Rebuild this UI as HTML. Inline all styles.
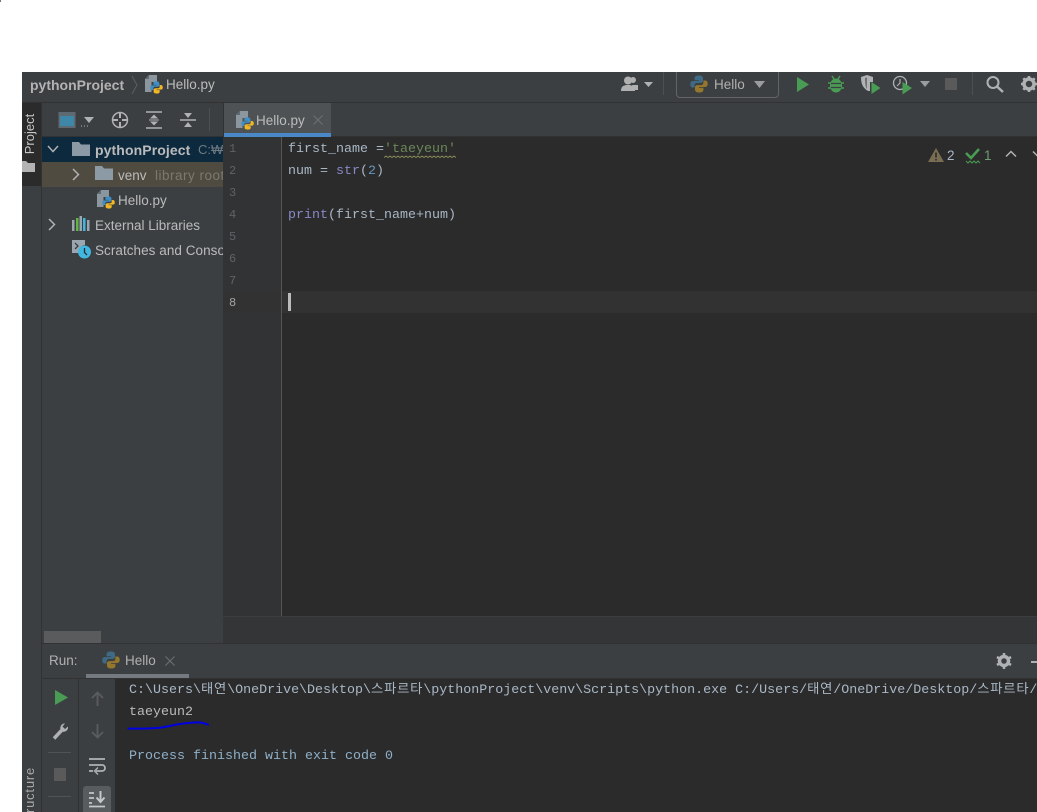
<!DOCTYPE html>
<html><head><meta charset="utf-8"><style>
html,body{margin:0;padding:0;background:#fff;width:1037px;height:812px;overflow:hidden}
#w{position:relative;width:1037px;height:812px;overflow:hidden;font-family:"Liberation Sans","Noto Sans CJK KR",sans-serif;font-size:13.5px;color:#bbbbbb}
.b{position:absolute}
.t{position:absolute;white-space:pre;line-height:18px}
.m{position:absolute;white-space:pre;font-family:"Liberation Mono","Noto Sans CJK KR",monospace;font-size:13.33px;line-height:18px;color:#a9b7c6}
.k{font-size:13.33px;letter-spacing:.78px}
.n{position:absolute;font-family:"Liberation Mono",monospace;font-size:12px;line-height:16px;color:#606366;left:229px}
svg{position:absolute;overflow:visible}
</style></head><body><div id="w">
<svg width="0" height="0" style="position:absolute"><defs>
<symbol id="py" viewBox="0 0 18 18"><path d="M8.7 0.5C5.5 0.5 4.6 1.7 4.6 3.4V5.3H9V6H2.8C1 6 0.3 7.5 0.3 9.2 0.3 11 1 12.5 2.8 12.5H4.6V10.2C4.6 8.7 5.6 7.9 7 7.9H10.8C12 7.9 13 7 13 5.7V3.4C13 1.5 11.5 0.5 8.7 0.5Z" fill="#3f8fc4"/><path d="M9.3 17.5C12.5 17.5 13.4 16.3 13.4 14.6V12.7H9V12H15.2C17 12 17.7 10.5 17.7 8.8 17.7 7 17 5.5 15.2 5.5H13.4V7.8C13.4 9.3 12.4 10.1 11 10.1H7.2C6 10.1 5 11 5 12.3V14.6C5 16.5 6.5 17.5 9.3 17.5Z" fill="#f2b824"/></symbol>
<symbol id="pydim" viewBox="0 0 18 18"><path d="M8.7 0.5C5.5 0.5 4.6 1.7 4.6 3.4V5.3H9V6H2.8C1 6 0.3 7.5 0.3 9.2 0.3 11 1 12.5 2.8 12.5H4.6V10.2C4.6 8.7 5.6 7.9 7 7.9H10.8C12 7.9 13 7 13 5.7V3.4C13 1.5 11.5 0.5 8.7 0.5Z" fill="#3e6a86"/><path d="M9.3 17.5C12.5 17.5 13.4 16.3 13.4 14.6V12.7H9V12H15.2C17 12 17.7 10.5 17.7 8.8 17.7 7 17 5.5 15.2 5.5H13.4V7.8C13.4 9.3 12.4 10.1 11 10.1H7.2C6 10.1 5 11 5 12.3V14.6C5 16.5 6.5 17.5 9.3 17.5Z" fill="#94762c"/></symbol>
<symbol id="pyf" viewBox="0 0 18 19"><path d="M4 0H12V7H6.500V17H0V4Z" fill="#8b969e"/><path d="M4 0V4H0Z" fill="#5f6b73"/><use href="#py" x="5" y="6" width="13" height="13"/></symbol>
<symbol id="folder" viewBox="0 0 18 14"><path d="M0 0H7L9 2.500H18V14H0Z" fill="#8c9aa5"/></symbol>
</defs></svg>

<div class="b" style="left:0;top:0;width:1px;height:2px;background:#777"></div>

<!-- window -->
<div class="b" style="left:22px;top:72px;width:1015px;height:740px;background:#3c3f41"></div>
<div class="b" style="left:22px;top:102px;width:1015px;height:1px;background:#323232"></div>

<!-- top bar -->
<div class="t" style="left:30px;top:76px;font-weight:bold;color:#b3b3b3;font-size:14px">pythonProject</div>
<svg style="left:131px;top:75px" width="8" height="20"><path d="M1 1L6 10 1 19" fill="none" stroke="#5c5f61"/></svg>
<svg style="left:145px;top:75px" width="18" height="19"><use href="#pyf"/></svg>
<div class="t" style="left:166px;top:76px">Hello.py</div>

<svg style="left:621px;top:76px" width="32" height="16"><circle cx="7" cy="4.500" r="4" fill="#b0b0b0"/><path d="M0 15C0 10 3 9 7 9 11 9 14 10 14 15Z" fill="#b0b0b0"/><circle cx="12" cy="4" r="3" fill="#b0b0b0"/><path d="M11 9H17V14H13Z" fill="#b0b0b0"/><path d="M23 6H32L27.500 11Z" fill="#afb1b3"/></svg>
<div class="b" style="left:663px;top:72px;width:1px;height:23px;background:#4d5052"></div>
<div class="b" style="left:676px;top:68px;border:1px solid #646464;border-radius:4px;box-sizing:border-box;clip-path:inset(4px 0 0 0);width:103px;height:30px;"></div>
<svg style="left:690px;top:75px" width="18" height="18"><use href="#pydim"/></svg>
<div class="t" style="left:714px;top:76px;color:#b0b0b0">Hello</div>
<svg style="left:754px;top:81px" width="12" height="8"><path d="M0 0H11L5.500 7Z" fill="#9a9c9e"/></svg>

<svg style="left:796px;top:76px" width="14" height="17"><path d="M1 1L13 8.500 1 16Z" fill="#499c54"/></svg>
<svg style="left:828px;top:75px" width="16" height="18"><g stroke="#499c54" stroke-width="1.500" fill="none"><path d="M4 1L6 4M12 1L10 4M0 8H3M13 8H16M0 13H3M13 13H16"/></g><ellipse cx="8" cy="10.500" rx="6" ry="7" fill="#499c54"/><path d="M3 8.500H13M3 12.500H13" stroke="#3c3f41" stroke-width="1.300"/></svg>
<svg style="left:861px;top:75px" width="20" height="20"><path d="M0 2L6 0 12 2V7H9V16H7C2 13 0 9 0 2Z" fill="#afb1b3"/><path d="M6 2.500V14C4.500 12 4 9 4 3Z" fill="#6e7072"/><path d="M10.500 7L19.500 13 10.500 19Z" fill="#499c54"/></svg>
<svg style="left:892px;top:75px" width="21" height="20"><circle cx="8" cy="8" r="6.500" fill="none" stroke="#afb1b3" stroke-width="1.300"/><path d="M8 4V8L5 11" fill="none" stroke="#afb1b3" stroke-width="1.200"/><path d="M10.500 7L20 13 10.500 19.500Z" fill="#499c54"/></svg>
<svg style="left:920px;top:81px" width="11" height="7"><path d="M0 0H10L5 6Z" fill="#9a9c9e"/></svg>
<div class="b" style="left:945px;top:78px;width:12px;height:12px;background:#5a5a5a"></div>
<div class="b" style="left:972px;top:72px;width:1px;height:23px;background:#4d5052"></div>
<svg style="left:986px;top:75px" width="18" height="18"><circle cx="7" cy="7.500" r="5.500" fill="none" stroke="#afb1b3" stroke-width="2"/><path d="M11 11.500L17 17" stroke="#afb1b3" stroke-width="2.500"/></svg>
<svg style="left:1021px;top:76px" width="16" height="16"><circle cx="8" cy="8" r="5" fill="none" stroke="#afb1b3" stroke-width="3.500"/><path d="M8 0V3M8 13V16M0 8H3M13 8H16M2.300 2.300L4.300 4.300M11.700 11.700L13.700 13.700M2.300 13.700L4.300 11.700M11.700 4.300L13.700 2.300" stroke="#afb1b3" stroke-width="2.500"/></svg>

<!-- left strip -->
<div class="b" style="left:41px;top:103px;width:1px;height:709px;background:#323232"></div>
<div class="b" style="left:22px;top:103px;width:19px;height:83px;background:#2b2b2b"></div>
<div class="t" style="left:1px;top:125px;width:58px;text-align:center;transform:rotate(-90deg);font-size:13px;color:#c8c8c8;transform-origin:center">Project</div>
<svg style="left:22px;top:161px" width="13" height="11"><path d="M0 0H4L6 2H13V11H0Z" fill="#b3b3b3"/></svg>
<div class="t" style="left:1px;top:781px;width:58px;text-align:center;transform:rotate(-90deg);font-size:13px;color:#aaa;letter-spacing:.8px">ructure</div>

<!-- project toolbar -->
<svg style="left:58px;top:111px" width="36" height="18"><rect x=".500" y="1" width="17" height="16" fill="#5e6a72"/><rect x="2" y="5" width="14" height="10" fill="#3e87a8"/><path d="M26 6H36L31 12Z" fill="#afb1b3"/><path d="M23 15H24M26 15H27M29 15H30" stroke="#afb1b3"/></svg>
<svg style="left:111px;top:111px" width="18" height="18"><circle cx="9" cy="9" r="7.500" fill="none" stroke="#afb1b3" stroke-width="1.500"/><path d="M9 1V7M9 11V17M1 9H7M11 9H17" stroke="#afb1b3" stroke-width="2"/></svg>
<svg style="left:146px;top:111px" width="16" height="18"><path d="M0 1H16M0 17H16" stroke="#afb1b3" stroke-width="1.500"/><path d="M8 3.500L12 7.500H4ZM8 14.500L12 10.500H4Z" fill="#afb1b3"/><path d="M3 9H13" stroke="#afb1b3"/></svg>
<svg style="left:180px;top:111px" width="16" height="18"><path d="M0 9H16" stroke="#afb1b3" stroke-width="1.500"/><path d="M8 7L12 2H4ZM8 11L12 16H4Z" fill="#afb1b3"/></svg>
<div class="b" style="left:209px;top:108px;width:1px;height:23px;background:#4d5052"></div>

<!-- tree -->
<div class="b" style="left:42px;top:136px;width:181px;height:1px;background:#323232"></div>
<div class="b" style="left:42px;top:137px;width:181px;height:25px;background:#0d293e"></div>
<div class="b" style="left:42px;top:162px;width:181px;height:25px;background:#4f4b41"></div>
<svg style="left:47px;top:144px" width="12" height="10"><path d="M1 2L6 7.500 11 2" fill="none" stroke="#afb1b3" stroke-width="1.500"/></svg>
<svg style="left:72px;top:142px" width="18" height="14"><use href="#folder"/></svg>
<div class="t" style="left:95px;top:141px;font-weight:bold;font-size:14px;letter-spacing:.1px;color:#bbbbbb">pythonProject</div>
<div class="t" style="left:198px;top:141px;width:25px;overflow:hidden;color:#6f7a82;font-size:13px">C:₩Us</div>
<svg style="left:71px;top:168px" width="9" height="13"><path d="M2 1L7.500 6.500 2 12" fill="none" stroke="#afb1b3" stroke-width="1.500"/></svg>
<svg style="left:95px;top:166px" width="18" height="14"><use href="#folder"/></svg>
<div class="t" style="left:118px;top:167px">venv</div>
<div class="t" style="left:155px;top:167px;width:68px;overflow:hidden;color:#7c7a6f;letter-spacing:.5px">library root</div>
<svg style="left:97px;top:190px" width="18" height="19"><use href="#pyf"/></svg>
<div class="t" style="left:118px;top:192px">Hello.py</div>
<svg style="left:47px;top:218px" width="9" height="13"><path d="M2 1L7.500 6.500 2 12" fill="none" stroke="#afb1b3" stroke-width="1.500"/></svg>
<svg style="left:72px;top:216px" width="18" height="15"><rect x="0" y="4" width="2.500" height="11" fill="#9aa7b0"/><rect x="4" y="2" width="2.500" height="13" fill="#62b543"/><rect x="7.500" y="0" width="2.500" height="15" fill="#9aa7b0"/><rect x="11" y="2" width="2.500" height="13" fill="#40b6e0"/><rect x="15" y="4" width="2.500" height="11" fill="#9aa7b0"/></svg>
<div class="t" style="left:95px;top:217px">External Libraries</div>
<svg style="left:72px;top:240px" width="20" height="20"><path d="M0 0H13V5A6 6 0 0 0 7.500 13H0Z" fill="#9aa7b0"/><path d="M3 3L6 6 3 9" fill="none" stroke="#3c3f41" stroke-width="1.300"/><circle cx="12.500" cy="12" r="6.500" fill="#40b6e0"/><path d="M12.500 8V12.500L15 15" fill="none" stroke="#2b2b2b" stroke-width="1.300"/></svg>
<div class="t" style="left:95px;top:242px;width:128px;overflow:hidden;letter-spacing:.05px">Scratches and Consoles</div>
<div class="b" style="left:44px;top:631px;width:57px;height:12px;background:#595b5d"></div>
<div class="b" style="left:42px;top:643px;width:995px;height:1px;background:#323232"></div>

<!-- editor -->
<div class="b" style="left:223px;top:103px;width:814px;height:33px;background:#3c3f41"></div>
<div class="b" style="left:223px;top:103px;width:1px;height:34px;background:#323232"></div>
<div class="b" style="left:224px;top:103px;width:107px;height:30px;background:#4e5254"></div>
<div class="b" style="left:224px;top:133px;width:107px;height:4px;background:#4a88c7"></div>
<div class="b" style="left:331px;top:136px;width:706px;height:1px;background:#323232"></div>
<svg style="left:236px;top:111px" width="18" height="19"><use href="#pyf"/></svg>
<div class="t" style="left:256px;top:112px;color:#bbbbbb">Hello.py</div>
<svg style="left:313px;top:115px" width="10" height="10"><path d="M.5 .5L9.500 9.500M9.500 .5L.5 9.500" stroke="#6e7072" stroke-width="1"/></svg>

<div class="b" style="left:223px;top:137px;width:58px;height:506px;background:#313335"></div>
<div class="b" style="left:281px;top:137px;width:1px;height:479px;background:#555555"></div>
<div class="b" style="left:282px;top:137px;width:755px;height:479px;background:#2b2b2b"></div>
<div class="b" style="left:223px;top:617px;width:814px;height:26px;background:#333537"></div>
<div class="b" style="left:223px;top:616px;width:814px;height:1px;background:#3b3d3f"></div>
<div class="b" style="left:282px;top:291px;width:755px;height:22px;background:#323232"></div>
<div class="b" style="left:223px;top:291px;width:58px;height:22px;background:#323232"></div>
<div class="b" style="left:288px;top:293px;width:3px;height:18px;background:#bbbbbb"></div>

<div class="n" style="top:141px">1</div>
<div class="n" style="top:163px">2</div>
<div class="n" style="top:185px">3</div>
<div class="n" style="top:207px">4</div>
<div class="n" style="top:229px">5</div>
<div class="n" style="top:251px">6</div>
<div class="n" style="top:273px">7</div>
<div class="n" style="top:295px;color:#a4a3a3">8</div>

<div class="m" style="left:288px;top:141px">first_name =<span style="color:#6a8759">'taeyeun'</span></div>
<svg style="left:384px;top:155px" width="72" height="4"><path d="M0 2.500L2 1 4 2.500 6 1 8 2.500 10 1 12 2.500 14 1 16 2.500 18 1 20 2.500 22 1 24 2.500 26 1 28 2.500 30 1 32 2.500 34 1 36 2.500 38 1 40 2.500 42 1 44 2.500 46 1 48 2.500 50 1 52 2.500 54 1 56 2.500 58 1 60 2.500 62 1 64 2.500 66 1 68 2.500 70 1 72 2.500" fill="none" stroke="#8a8a5a" stroke-width=".9"/></svg>
<div class="m" style="left:288px;top:163px">num = <span style="color:#8888c6">str</span>(<span style="color:#6897bb">2</span>)</div>
<div class="m" style="left:288px;top:207px"><span style="color:#8888c6">print</span>(first_name+num)</div>

<svg style="left:928px;top:148px" width="16" height="14"><path d="M8 0L16 14H0Z" fill="#7a6e52"/><path d="M8 4.500V9.500M8 11V12.500" stroke="#2b2b2b" stroke-width="1.600"/></svg>
<div class="t" style="left:947px;top:147px;color:#a9b7c6">2</div>
<svg style="left:965px;top:148px" width="16" height="16"><path d="M1 5L6 10 14 1" fill="none" stroke="#499c54" stroke-width="2.600"/><path d="M1 13L3 15 5 13 7 15 9 13 11 15 13 13 15 15" fill="none" stroke="#499c54" stroke-width="1"/></svg>
<div class="t" style="left:984px;top:147px;color:#6f9c75">1</div>
<svg style="left:1005px;top:150px" width="12" height="8"><path d="M1 6.500L6 1.500 11 6.500" fill="none" stroke="#b0b2b4" stroke-width="1.500"/></svg>
<svg style="left:1032px;top:150px" width="12" height="8"><path d="M1 1.500L6 6.500 11 1.500" fill="none" stroke="#b0b2b4" stroke-width="1.500"/></svg>

<!-- run panel -->
<div class="t" style="left:49px;top:652px;color:#b0b0b0">Run:</div>
<svg style="left:102px;top:651px" width="18" height="18"><use href="#pydim"/></svg>
<div class="t" style="left:125px;top:652px;color:#b0b0b0">Hello</div>
<svg style="left:165px;top:656px" width="10" height="10"><path d="M.5 .5L9.500 9.500M9.500 .5L.5 9.500" stroke="#6e7072" stroke-width="1"/></svg>
<div class="b" style="left:86px;top:674px;width:103px;height:4px;background:#747a80"></div>
<div class="b" style="left:42px;top:678px;width:995px;height:1px;background:#323232"></div>
<svg style="left:996px;top:653px" width="16" height="16"><circle cx="8" cy="8" r="4.500" fill="none" stroke="#afb1b3" stroke-width="3.500"/><path d="M8 0V3M8 13V16M1 4L3.500 5.500M12.500 10.500L15 12M1 12L3.500 10.500M12.500 5.500L15 4" stroke="#afb1b3" stroke-width="2.500"/></svg>
<div class="b" style="left:1031px;top:661px;width:6px;height:2px;background:#afb1b3"></div>

<div class="b" style="left:78px;top:679px;width:1px;height:133px;background:#323232"></div>
<div class="b" style="left:115px;top:679px;width:922px;height:133px;background:#2b2b2b"></div>
<svg style="left:55px;top:690px" width="13" height="15"><path d="M0 0L13 7.500 0 15Z" fill="#499c54"/></svg>
<svg style="left:52px;top:722px" width="17" height="18"><path d="M2 16.500L9.500 8.500" stroke="#afb1b3" stroke-width="3.500"/><path d="M10 9.500A4.500 4.500 0 0 1 13 1.500L10.500 4.500 13 7 16 4.500A4.500 4.500 0 0 1 10 9.500Z" fill="#afb1b3"/></svg>
<div class="b" style="left:48px;top:752px;width:23px;height:1px;background:#505355"></div>
<div class="b" style="left:54px;top:768px;width:12px;height:13px;background:#5a5a5a"></div>
<div class="b" style="left:48px;top:796px;width:23px;height:1px;background:#505355"></div>

<svg style="left:91px;top:691px" width="13" height="15"><path d="M6.500 15V1.500M1 7L6.500 1.500 12 7" fill="none" stroke="#5a5c5e" stroke-width="1.800"/></svg>
<svg style="left:91px;top:724px" width="13" height="15"><path d="M6.500 0V13.500M1 8L6.500 13.500 12 8" fill="none" stroke="#5a5c5e" stroke-width="1.800"/></svg>
<svg style="left:89px;top:758px" width="17" height="17"><path d="M0 1H16" stroke="#afb1b3" stroke-width="1.800"/><path d="M0 7H13C17 7 17 13 13 13H7" fill="none" stroke="#afb1b3" stroke-width="1.800"/><path d="M9 9.500L5.500 13 9 16.500" fill="none" stroke="#afb1b3" stroke-width="1.400"/><path d="M0 13H4" stroke="#afb1b3" stroke-width="1.800"/></svg>
<div class="b" style="left:83px;top:786px;width:28px;height:26px;background:#585c5f;border-radius:3px 3px 0 0"></div>
<svg style="left:89px;top:791px" width="17" height="17"><path d="M0 2H5M0 7H5M0 12H3M0 15.500H16" stroke="#c4c6c8" stroke-width="1.800"/><path d="M11.500 0V10M7.500 6.500L11.500 11 15.500 6.500" fill="none" stroke="#c4c6c8" stroke-width="2"/></svg>

<div class="m" style="left:129px;top:682px">C:\Users\<span class="k">태연</span>\OneDrive\Desktop\<span class="k">스파르타</span>\pythonProject\venv\Scripts\python.exe C:/Users/<span class="k">태연</span>/OneDrive/Desktop/<span class="k">스파르타</span>/</div>
<div class="m" style="left:129px;top:704px;color:#bbbbbb">taeyeun2</div>
<svg style="left:127px;top:720px" width="84" height="10"><path d="M1.500 8.600C10 8.700 22 8.500 30 8 38 7.300 45 5.300 51 4.300 58 3.300 68 2.100 74 2.500L81 4.600" fill="none" stroke="#0000e6" stroke-width="2" stroke-linecap="round"/></svg>
<div class="m" style="left:129px;top:748px;color:#8fb0c8">Process finished with exit code 0</div>
</div></body></html>
